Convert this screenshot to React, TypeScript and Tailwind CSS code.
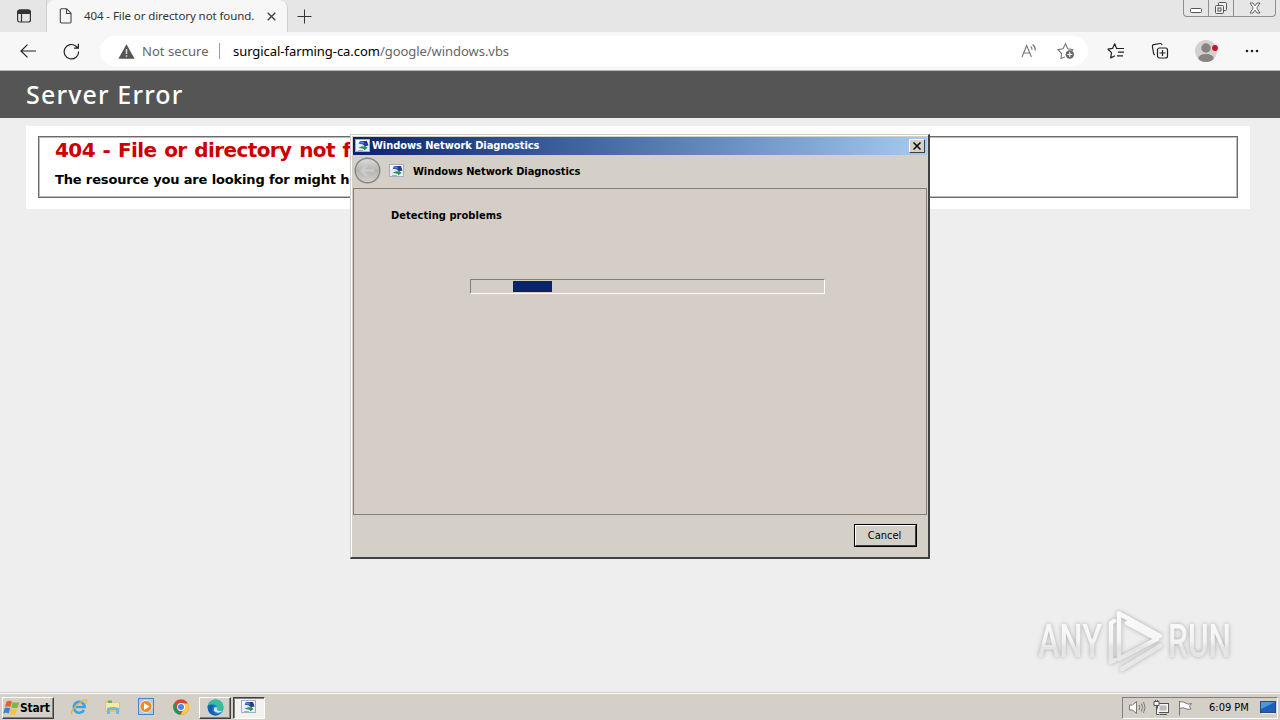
import React from 'react';

const SEGOE = "font-['Noto_Sans','Open_Sans',sans-serif]";
const TAHOMA = "font-['DejaVu_Sans_Condensed','DejaVu_Sans',sans-serif]";
const VERDANA = "font-['DejaVu_Sans',sans-serif]";

const DiagIcon: React.FC = () => (
  <svg width="16" height="16" viewBox="0 0 16 16" className="shrink-0">
    <rect x="0.5" y="1.5" width="14" height="12" fill="#e9eff8" stroke="#a3adc4" />
    <path d="M1 2h13v4H1z" fill="#fbfcff" />
    <path d="M5.500 3h6.500l1.500 4.500-4 .8L8 6.500 3.500 5.500z" fill="#26369f" />
    <path d="M4 3.500h4l1.500 2H6z" fill="#5a86e4" />
    <path d="M3.500 10q3-2.500 6-1.500V7l3 3-3.500 2.500v-1.500q-3-.8-5.500-1z" fill="#23935a" />
    <path d="M3 12h5v1H3z" fill="#9fb0c4" />
  </svg>
);

const TabStrip: React.FC = () => (
  <div className="flex h-8 bg-[#e6e6e6]">
    <div className="flex w-[47px] items-center justify-center border-r border-[#d0d0d0] pl-[2px]">
      <svg width="16" height="16" viewBox="0 0 16 16" fill="none" stroke="#333" strokeWidth="1.2">
        <rect x="1.6" y="2" width="12.8" height="12" rx="2" />
        <path d="M2 3.500Q2 2 4 2h8q2 0 2.400 2v1.500H2z" fill="#333" />
        <path d="M5.500 5v9" />
      </svg>
    </div>
    <div className="flex w-[241px] items-center rounded-t-lg border-r border-[#cfcfcf] bg-[#f7f7f7] pl-3">
      <svg width="14" height="16" viewBox="0 0 14 16" fill="none" stroke="#444" strokeWidth="1.1" strokeLinejoin="round">
        <path d="M2.500 0.800h5.200l4.300 4.400v8.600q0 1.200-1.200 1.200H2.500q-1.200 0-1.200-1.200V2q0-1.200 1.200-1.200z" />
        <path d="M7.500 1v4.500H12" />
      </svg>
      <span className={`${SEGOE} ml-[11px] w-[172px] whitespace-nowrap text-[11.5px] tracking-[-0.09px] text-[#333]`}>
        404 - File or directory not found.
      </span>
      <svg width="9" height="9" viewBox="0 0 9 9" className="ml-[11px]" stroke="#444" strokeWidth="1.4">
        <path d="M0.700 0.700l7.600 7.600M8.300 0.700L0.700 8.300" />
      </svg>
    </div>
    <div className="flex flex-1 items-center pl-[9px]">
      <svg width="15" height="15" viewBox="0 0 15 15" stroke="#333">
        <path d="M0.500 7.500h14M7.500 0.500v14" />
      </svg>
    </div>
    <div className="mr-1 flex h-[17px] rounded-b border border-t-0 border-[#8f8f8f]">
      <div className="flex w-[25px] items-end justify-center border-r border-[#8f8f8f] pb-[3px]">
        <svg width="13" height="5" viewBox="0 0 13 5" fill="#fff" stroke="#555">
          <rect x="0.500" y="0.500" width="11" height="4" rx="1" />
        </svg>
      </div>
      <div className="flex w-[25px] items-center justify-center border-r border-[#8f8f8f]">
        <svg width="14" height="14" viewBox="0 0 14 14" fill="#eee" stroke="#555">
          <rect x="4.500" y="1.500" width="8" height="8" rx="1" />
          <rect x="1.500" y="4.500" width="8" height="8" rx="1" />
          <rect x="4" y="7" width="3" height="3" />
        </svg>
      </div>
      <div className="flex w-[41px] items-center justify-center">
        <svg width="12" height="12" viewBox="0 0 12 12" fill="#fff" stroke="#555" strokeWidth="0.9">
          <path d="M1 1h3l2 2.800L8 1h3L7.800 6 11 11H8L6 8.200 4 11H1L4.200 6z" />
        </svg>
      </div>
    </div>
  </div>
);

const Toolbar: React.FC = () => (
  <div className="flex h-[39px] items-center border-b border-[#b5b8b8] bg-[#f7f7f7] pl-5">
    <svg width="16" height="14" viewBox="0 0 16 14" fill="none" stroke="#222" strokeWidth="1.2">
      <path d="M16 7H1M7.500 0.600L1 7l6.500 6.400" />
    </svg>
    <svg width="17" height="17" viewBox="0 0 17 17" className="ml-[27px]" fill="none" stroke="#222" strokeWidth="1.2">
      <path d="M15.600 8.500A7.200 7.200 0 1 1 13 3.200L15.200 5M15.400 0.800v4.400H11" />
    </svg>
    <div className={`${SEGOE} ml-5 flex h-[30px] w-[988px] items-center rounded-full bg-white pl-[18px] text-[13px] text-[#666]`}>
      <svg width="17" height="15" viewBox="0 0 17 15">
        <path d="M8.500 0.300L16.600 14.700H0.400z" fill="#555" />
        <path d="M8.500 5v5M8.500 11.200v1.600" stroke="#ddd" strokeWidth="1.500" />
      </svg>
      <span className="ml-[7px] w-[66px] whitespace-nowrap pt-px tracking-[0.05px]">Not secure</span>
      <div className="mx-[11px] h-4 w-px bg-[#999]" />
      <div className="ml-[2px] flex-1 whitespace-nowrap pt-px tracking-[-0.05px]">
        <span className="text-black">surgical-farming-ca.com</span>/google/windows.vbs
      </div>
      <svg width="17" height="16" viewBox="0 0 17 16" fill="none" stroke="#777" strokeWidth="1.100">
        <path d="M1 14L5.700 2.500 10.400 14M2.700 10h6M9.700 3.500q1.400 1.300 1.300 3.400M11.600 1.500q3 2.300 2.800 6" />
      </svg>
      <svg width="18" height="18" viewBox="0 0 18 18" className="mr-[13px] ml-[19px]" fill="none" stroke="#777" strokeWidth="1.100">
        <path d="M8 15l-4 1.500.6-5L1 7.700l5-.9L8.500 1.800l2.300 5 5 .9-1 1.300" />
        <circle cx="12.800" cy="12.500" r="4.200" fill="#666" stroke="none" />
        <path d="M12.800 10v5M10.300 12.500h5" stroke="#fff" />
      </svg>
    </div>
    <svg width="18" height="18" viewBox="0 0 18 18" className="ml-[19px]" fill="none" stroke="#222" strokeWidth="1.200" strokeLinejoin="round">
      <path d="M10 6.500h-.4L7.700 1.800 5.500 6.400 1 7.200l3.500 3.400-.8 5.300L8 13.800M10 6.500h7M11 10.200h6M10 13.800h6" />
    </svg>
    <svg width="18" height="18" viewBox="0 0 18 18" className="ml-[26px]" fill="none" stroke="#222" strokeWidth="1.200">
      <path d="M4 13q-1.300-.3-1.500-2L1.400 4.500Q1.200 3 2.700 2.700L9 1.500q1.600-.2 2.100 1.700" />
      <rect x="6.500" y="6" width="10" height="10" rx="2" fill="#f7f7f7" />
      <path d="M11.500 8v6M8.500 11h6" />
    </svg>
    <svg width="23" height="22" viewBox="0 0 23 22" className="ml-[26px]">
      <circle cx="11" cy="11" r="11" fill="#d3d1cf" />
      <circle cx="11" cy="8" r="4.700" fill="#878380" />
      <ellipse cx="11" cy="18" rx="7.700" ry="4" fill="#878380" />
      <circle cx="20" cy="8" r="2.900" fill="#d20e1e" />
    </svg>
    <svg width="14" height="4" viewBox="0 0 14 4" className="ml-[27px]" fill="#222">
      <circle cx="2" cy="2" r="1.300" /><circle cx="7" cy="2" r="1.300" /><circle cx="12" cy="2" r="1.300" />
    </svg>
  </div>
);

const ErrorPage: React.FC = () => (
  <div className="relative flex-1 bg-[#eee]">
    <div className="flex h-[47px] items-center bg-[#555] pt-px pl-[26px]">
      <h1 className="whitespace-nowrap font-['Noto_Sans',sans-serif] text-[25px] font-medium tracking-[1.15px] text-white">Server Error</h1>
    </div>
    <div className="mx-[26px] mr-[30px] mt-2 h-[83px] bg-white px-3 pt-[10px]">
      <div className={`${VERDANA} h-[62px] overflow-hidden border border-[#6c6c6c] pt-px pl-4 font-bold whitespace-nowrap shadow-[inset_0_0_0_1px_#bbb]`}>
        <h2 className="text-[20px] leading-6 tracking-[-0.6px] text-[#c00] [word-spacing:1.3px]">404 - File or directory not found.</h2>
        <h3 className="mt-[10px] text-[13px] leading-4 tracking-[-0.15px] text-black">
          The resource you are looking for might have been removed, had its name changed, or is temporarily unavailable.
        </h3>
      </div>
    </div>
    <div className="absolute right-[43px] bottom-[18px]">
      <svg width="202" height="66" viewBox="0 0 202 66" className="overflow-visible drop-shadow-[0_0_2px_#aaa]">
        <defs>
          <linearGradient id="mark" x1="0" y1="0" x2="0" y2="66" gradientUnits="userSpaceOnUse">
            <stop offset="0" stopColor="#fcfcfc" />
            <stop offset="0.5" stopColor="#f4f4f4" />
            <stop offset="0.6" stopColor="#e4e4e4" />
            <stop offset="1" stopColor="#ebebeb" />
          </linearGradient>
        </defs>
        <g fill="url(#mark)" fontFamily="Roboto, sans-serif" fontSize="46" fontWeight="500">
          <text x="3" y="49" textLength="64" lengthAdjust="spacingAndGlyphs">ANY</text>
          <text x="133" y="49" textLength="63" lengthAdjust="spacingAndGlyphs">RUN</text>
        </g>
        <g fill="none" stroke="url(#mark)" strokeWidth="4.500" strokeLinejoin="round" strokeLinecap="round">
          <path d="M84 5.500L125 28M84 5.500V51l38-20L92 15" />
          <path d="M76 54V15l3-2M76 54l4-2M87 61l38-23" />
        </g>
      </svg>
    </div>
  </div>
);

const DiagnosticsWindow: React.FC = () => (
  <div className={`${TAHOMA} absolute top-[134px] left-[350px] flex h-[425px] w-[580px] flex-col border-t border-r-2 border-b-2 border-l border-t-[#d4d0c8] border-r-[#404040] border-b-[#404040] border-l-[#d4d0c8] bg-[#d4d0c8] text-[11px]`}>
    <div className="flex flex-1 flex-col border-t border-l border-white p-px pb-0">
      <div className="flex h-[18px] items-center bg-linear-to-r from-[#0a246a] to-[#a6caf0] px-[2px]">
        <DiagIcon />
        <span className="ml-px flex-1 pt-px font-bold tracking-[-0.07px] whitespace-nowrap text-white">Windows Network Diagnostics</span>
        <div className="flex h-[14px] w-4 items-center justify-center border border-t-white border-r-[#404040] border-b-[#404040] border-l-white bg-[#d4d0c8]">
          <svg width="8" height="8" viewBox="0 0 8 8" stroke="#000" strokeWidth="1.500">
            <path d="M0.500 0.500l7 7M7.500 0.500l-7 7" />
          </svg>
        </div>
      </div>
      <div className="flex h-[33px] items-center pb-[2px] pl-px">
        <svg width="27" height="27" viewBox="0 0 27 27">
          <defs>
            <linearGradient id="orb" x1="0" y1="0" x2="0" y2="1">
              <stop offset="0" stopColor="#dcdcda" />
              <stop offset="0.5" stopColor="#b6b5b2" />
              <stop offset="1" stopColor="#d0d0cd" />
            </linearGradient>
          </defs>
          <circle cx="13.500" cy="13.500" r="12.300" fill="url(#orb)" stroke="#858585" strokeWidth="1.400" />
          <path d="M20 13.500H8M13 8l-5.500 5.500L13 19" fill="none" stroke="#cbcbc8" strokeWidth="2.500" />
        </svg>
        <div className="ml-2 pt-px"><DiagIcon /></div>
        <span className="ml-2 pt-[3px] font-bold tracking-[-0.07px] whitespace-nowrap">Windows Network Diagnostics</span>
      </div>
      <div className="h-[327px] border border-[#848078] bg-[#d5cec7] pt-5 pl-[37px]">
        <p className="font-bold leading-[14px] tracking-[0.05px]">Detecting problems</p>
        <div className="mt-14 ml-[79px] h-[15px] w-[355px] border border-t-[#808080] border-r-white border-b-white border-l-[#808080] pt-px pl-[42px]">
          <div className="h-[11px] w-[39px] bg-[#0a246a]" />
        </div>
      </div>
      <div className="flex flex-1 justify-end pt-[9px] pr-[10px]">
        <button className="h-[23px] w-[63px] border border-black">
          <div className="flex h-full items-center justify-center border border-t-white border-r-[#404040] border-b-[#404040] border-l-white pt-px pr-[2px]">
            Cancel
          </div>
        </button>
      </div>
    </div>
  </div>
);

const Taskbar: React.FC = () => (
  <div className={`${TAHOMA} flex h-7 items-center border-t border-[#d4d0c8] bg-[#d4d0c8] text-[11px] shadow-[inset_0_1px_0_#fff]`}>
    <div className="mt-[2px] ml-[2px] flex h-[22px] w-[52px] items-center border border-t-white border-r-[#404040] border-b-[#404040] border-l-white shadow-[inset_-1px_-1px_0_#808080]">
      <svg width="17" height="16" viewBox="0 0 17 16" className="shrink-0">
        <path d="M3.500 1.500q3-1.500 5.500 0L7.500 7q-2.500-1.300-5.500 0z" fill="#e5622b" />
        <path d="M9.800 2q3 1.300 6.500 0L14.700 7.500q-3 1.200-6.500 0z" fill="#7db83a" />
        <path d="M1.700 8q2.500-1.200 5.500 0l-1.500 5.500q-2.500-1.300-5.500 0z" fill="#3d83cf" />
        <path d="M7.900 8.500q3 1.300 6.500 0L12.800 14q-3 1.200-6.500 0z" fill="#f5c433" />
      </svg>
      <span className="text-[12px] font-bold tracking-[-0.2px]">Start</span>
    </div>
    <svg width="18" height="18" viewBox="0 0 18 18" className="ml-4" fill="none">
      <path d="M14 12a5.500 5.500 0 1 1 .7-3H5.500" stroke="#39a3e3" strokeWidth="2.600" />
      <path d="M2.500 16Q-1 14.500 7 7q7-6 9.500-5 1 .8-.8 3.500" stroke="#e8b83c" strokeWidth="1.200" />
    </svg>
    <svg width="18" height="18" viewBox="0 0 18 18" className="ml-4">
      <path d="M1 3h5l1 1.500h9V14H1z" fill="#e5c65b" />
      <path d="M2 5h13v7H2z" fill="#f8e9a5" />
      <path d="M4 2.500h4V5H4z" fill="#5fb370" />
      <path d="M3 10q6-2 12 0v6h-3v-4H6v4H3z" fill="#72b7dc" />
    </svg>
    <svg width="17" height="17" viewBox="0 0 17 17" className="ml-4">
      <rect x="0.500" y="0.500" width="15" height="16" fill="#a9cfee" stroke="#4d86bd" />
      <circle cx="8" cy="8.500" r="6" fill="#f18a21" stroke="#fff" strokeWidth="0.700" />
      <path d="M6 5l5.500 3.500L6 12z" fill="#fff" />
    </svg>
    <svg width="16" height="16" viewBox="0 0 16 16" className="ml-[18px]">
      <circle cx="8" cy="8" r="7.800" fill="#db4437" />
      <path d="M1.200 4.200L5 11l2.500 4.700A7.800 7.800 0 0 1 1.200 4.200z" fill="#0f9d58" />
      <path d="M8 4.500h7a7.800 7.800 0 0 1-7.500 11.300L11 10z" fill="#ffcd40" />
      <circle cx="8" cy="8" r="3.900" fill="#fff" />
      <circle cx="8" cy="8" r="3" fill="#4285f4" />
    </svg>
    <div className="mt-[2px] ml-[10px] flex h-[22px] w-8 items-center justify-center border border-t-white border-r-[#404040] border-b-[#404040] border-l-white shadow-[inset_-1px_-1px_0_#808080]">
      <svg width="17" height="17" viewBox="0 0 17 17">
        <circle cx="8.500" cy="8.500" r="8" fill="#1483cf" />
        <path d="M.6 8Q2 .5 8.500.5q7 0 8 7 .3 4-4.500 4-3 0-2.300-2Q11 6 7 5.500 3 5 .6 8z" fill="#37bf9c" />
        <path d="M.7 7Q4 4.500 7 6.500q-3 2.500-1 6t6.500 3Q6 18 2.500 13.500.4 10.500.7 7z" fill="#165fae" />
        <path d="M10 8.500q-.9 3 2.600 3.500l3.200-.7q-2 3-5 2.500Q6 13 7 9.500q1-2.500 3-1z" fill="#d9e2e3" />
      </svg>
    </div>
    <div className="mt-[2px] ml-[2px] flex h-[22px] w-8 items-center justify-center border border-t-[#404040] border-r-white border-b-white border-l-[#404040] bg-[#f4f2ef] pb-px shadow-[inset_1px_1px_0_#808080]">
      <DiagIcon />
    </div>
    <div className="flex-1" />
    <div className="mt-[2px] mr-[2px] flex h-[22px] w-[156px] items-center border border-t-[#808080] border-r-white border-b-white border-l-[#808080] pl-[6px]">
      <svg width="17" height="15" viewBox="0 0 17 15" fill="#fff" stroke="#777">
        <path d="M0.500 5h3l4-3.500v12L3.500 10h-3z" />
        <path d="M10 5q1.500 2.500 0 5M12.300 3.500q2.600 4 0 8M14.500 2q3 5.500 0 11" fill="none" />
      </svg>
      <svg width="17" height="16" viewBox="0 0 17 16" className="ml-[7px]" fill="#f6f6f6" stroke="#555">
        <rect x="4.500" y="3.500" width="11" height="9" />
        <path d="M7 14.500h7" />
        <path d="M6.500 5.500h7v5h-7z" fill="#bbb" stroke="none" />
        <path d="M1 1.500h5v4H1zM2.500 0v2M4.500 0v2M3.500 6v8.500h3" />
      </svg>
      <svg width="16" height="16" viewBox="0 0 16 16" className="ml-[7px]" fill="#fff" stroke="#777">
        <path d="M2.500 1v14.500M2.500 2q3-1 6 1 3 2 6 .5l-2 3 1.500 2.500q-3 1-5.500-.5t-6 0z" />
      </svg>
      <span className="ml-4 w-[41px] pt-px whitespace-nowrap">6:09 PM</span>
      <svg width="16" height="15" viewBox="0 0 16 15" className="ml-[10px]">
        <rect x="0.500" y="1.500" width="15" height="11" fill="#1b62b7" stroke="#2b4b83" />
        <path d="M1 2h14L1 9z" fill="#4e95dc" />
        <path d="M2 13.500h12" stroke="#eee" />
      </svg>
    </div>
  </div>
);

export default function App() {
  return (
    <div className="relative flex h-[720px] w-[1280px] flex-col overflow-hidden bg-[#eee] text-black">
      <TabStrip />
      <Toolbar />
      <ErrorPage />
      <Taskbar />
      <DiagnosticsWindow />
    </div>
  );
}
